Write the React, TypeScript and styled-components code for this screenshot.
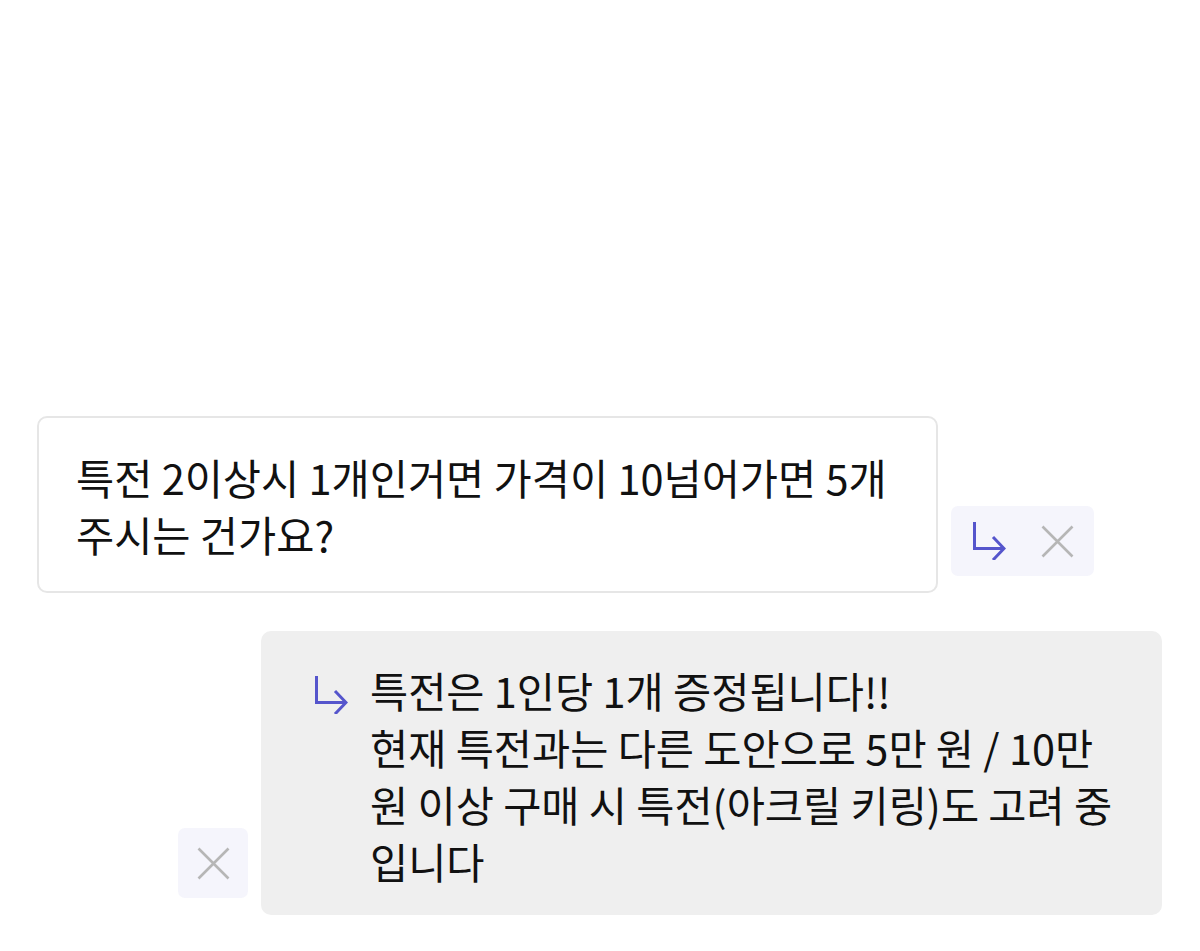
import React from "react";
import styled, { createGlobalStyle } from "styled-components";

const Global = createGlobalStyle`
  html, body { margin: 0; padding: 0; background: #ffffff; }
  body { font-family: "Noto Sans CJK KR", "Noto Sans", sans-serif; color: #111; }
`;

const Page = styled.div`
  width: 1200px;
  height: 951px;
  box-sizing: border-box;
  padding-top: 416px;
  display: flex;
  flex-direction: column;
  gap: 38px;
`;

const Row = styled.div<{ $left: number }>`
  display: flex;
  align-items: flex-end;
  gap: 13px;
  padding-left: ${(p) => p.$left}px;
`;

const Bubble = styled.div<{ $variant: "question" | "answer" }>`
  box-sizing: border-box;
  width: 901px;
  border-radius: 10px;
  font-size: 41.5px;
  line-height: 57px;
  display: flex;
  align-items: flex-start;
  ${(p) =>
    p.$variant === "question"
      ? `
    background: #fff;
    border: 2px solid #e6e6e6;
    padding: 31px 10px 24px 37px;
    min-height: 177px;
  `
      : `
    background: #efefef;
    padding: 31px 10px 25px 53px;
    min-height: 284px;
  `}
`;

const BubbleText = styled.div`
  white-space: pre-line;
`;

const ReplyMark = styled.span`
  flex: none;
  display: flex;
  padding-top: 14px;
  margin-right: 22px;
`;

const ActionBox = styled.div<{ $wide?: boolean }>`
  box-sizing: border-box;
  height: 70px;
  width: ${(p) => (p.$wide ? 143 : 70)}px;
  margin-bottom: 17px;
  background: #f5f5fc;
  border-radius: 7px;
  display: flex;
  align-items: center;
  justify-content: ${(p) => (p.$wide ? "space-between" : "center")};
  padding: 0 ${(p) => (p.$wide ? 20 : 0)}px 0 ${(p) => (p.$wide ? 21 : 0)}px;
`;

const ReplyIcon = () => (
  <svg width="34" height="38" viewBox="0 0 34 38" fill="none">
    <path
      d="M2.5 0 V26.5 H32 M21 15 L32 26.5 L21 38"
      stroke="#5555cc"
      strokeWidth="3"
      strokeLinecap="butt"
      strokeLinejoin="miter"
    />
  </svg>
);

const CloseIcon = () => (
  <svg width="33" height="33" viewBox="0 0 33 33" fill="none">
    <path d="M1.5 1.5 L31.5 31.5 M31.5 1.5 L1.5 31.5" stroke="#b6b6b6" strokeWidth="2.6" />
  </svg>
);

export default function App() {
  return (
    <>
      <Global />
      <Page>
        <Row $left={37}>
          <Bubble $variant="question">
            <BubbleText>
              {"특전 2이상시 1개인거면 가격이 10넘어가면 5개\n주시는 건가요?"}
            </BubbleText>
          </Bubble>
          <ActionBox $wide>
            <ReplyIcon />
            <CloseIcon />
          </ActionBox>
        </Row>
        <Row $left={178}>
          <ActionBox>
            <CloseIcon />
          </ActionBox>
          <Bubble $variant="answer">
            <ReplyMark>
              <ReplyIcon />
            </ReplyMark>
            <BubbleText>
              {
                "특전은 1인당 1개 증정됩니다!!\n현재 특전과는 다른 도안으로 5만 원 / 10만\n원 이상 구매 시 특전(아크릴 키링)도 고려 중\n입니다"
              }
            </BubbleText>
          </Bubble>
        </Row>
      </Page>
    </>
  );
}
